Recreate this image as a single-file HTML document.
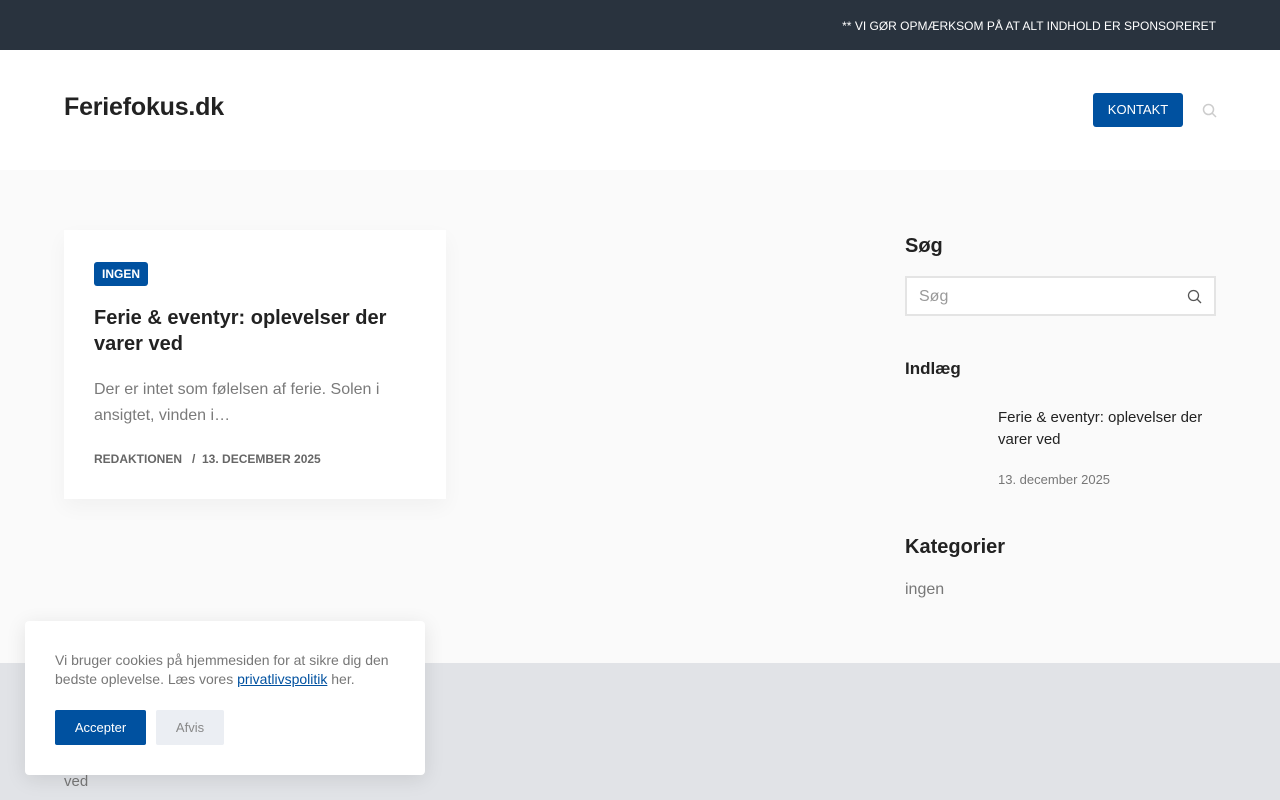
<!DOCTYPE html>
<html><head><meta charset="utf-8"><style>
*{margin:0;padding:0;box-sizing:border-box}
body{width:1280px;height:800px;overflow:hidden;font-family:"Liberation Sans",sans-serif;background:#fafafa;position:relative}
.top{height:50px;background:#29333e;color:#fff;font-size:12px;text-align:right;padding:19px 64px 0 0}
.hdr{height:120px;background:#fff;position:relative}
.logo{position:absolute;left:64px;top:93px;font-size:25px;font-weight:700;color:#222;letter-spacing:-0.2px}
.btn{position:absolute;left:1093px;top:93px;width:90px;height:34px;background:#0051a0;color:#fff;font-size:13px;border-radius:3px;text-align:center;line-height:34px}
.card{position:absolute;left:64px;top:230px;width:382px;height:269px;background:#fff;box-shadow:0 8px 20px rgba(0,0,0,.04);padding:32px 30px}
.tag{display:inline-block;background:#0051a0;color:#fff;font-size:12px;font-weight:700;padding:5px 8px;border-radius:3px}
h2{font-size:20px;color:#222;line-height:26px;margin-top:19px}
.ex{font-size:16px;color:#7a7a7a;line-height:26px;margin-top:20px}
.meta{font-size:12px;font-weight:700;color:#666;margin-top:23px}
.side{position:absolute;left:905px;color:#222}
.foot{position:absolute;left:0;top:663px;width:1280px;height:137px;background:#e1e3e7}
.ck{position:absolute;left:25px;top:621px;width:400px;height:154px;background:#fff;border-radius:4px;box-shadow:0 4px 20px rgba(0,0,0,.1);padding:30px;font-size:14px;color:#777;line-height:19px}
</style></head><body>
<div class="top">** VI GØR OPMÆRKSOM PÅ AT ALT INDHOLD ER SPONSORERET</div>
<div class="hdr"></div>
<div class="logo">Feriefokus.dk</div>
<div class="btn">KONTAKT</div>
<svg style="position:absolute;left:1202px;top:103px" width="15" height="15" viewBox="0 0 15 15"><circle cx="6.5" cy="6.5" r="5" fill="none" stroke="#ccc" stroke-width="1.5"/><line x1="10" y1="10" x2="14" y2="14" stroke="#ccc" stroke-width="1.5"/></svg>
<div class="card"><span class="tag">INGEN</span><h2>Ferie &amp; eventyr: oplevelser der varer ved</h2><div class="ex">Der er intet som følelsen af ferie. Solen i ansigtet, vinden i…</div><div class="meta">REDAKTIONEN &nbsp; / &nbsp;13. DECEMBER 2025</div></div>
<div class="side" style="top:235px;font-size:20px;font-weight:700">Søg</div>
<div class="side" style="top:276px;width:311px;height:40px;border:2px solid #e4e4e4;background:#fff;padding:10px 12px;font-size:16px;color:#999">Søg<svg style="position:absolute;right:12px;top:11px" width="15" height="15" viewBox="0 0 15 15"><circle cx="6.5" cy="6.5" r="5" fill="none" stroke="#555" stroke-width="1.3"/><line x1="10" y1="10" x2="14" y2="14" stroke="#555" stroke-width="1.3"/></svg></div>
<div class="side" style="top:359px;font-size:17px;font-weight:700">Indlæg</div>
<div class="side" style="left:998px;top:407px;font-size:15px;line-height:22px;width:210px">Ferie &amp; eventyr: oplevelser der varer ved</div>
<div class="side" style="left:998px;top:472px;font-size:13px;color:#777">13. december 2025</div>
<div class="side" style="top:536px;font-size:20px;font-weight:700">Kategorier</div>
<div class="side" style="top:581px;font-size:16px;color:#777">ingen</div>
<div class="foot"><div style="position:absolute;left:64px;top:110px;font-size:15px;color:#777">ved</div></div>
<div class="ck">Vi bruger cookies på hjemmesiden for at sikre dig den bedste oplevelse. Læs vores <a style="color:#0051a0;text-decoration:underline">privatlivspolitik</a> her.
<div style="margin-top:21px;display:flex;gap:10px"><div style="background:#0051a0;color:#fff;width:91px;height:35px;line-height:35px;text-align:center;border-radius:2px;font-size:13px">Accepter</div><div style="background:#ebeef3;color:#888;width:68px;height:35px;line-height:35px;text-align:center;border-radius:2px;font-size:13px">Afvis</div></div></div>
</body></html>
